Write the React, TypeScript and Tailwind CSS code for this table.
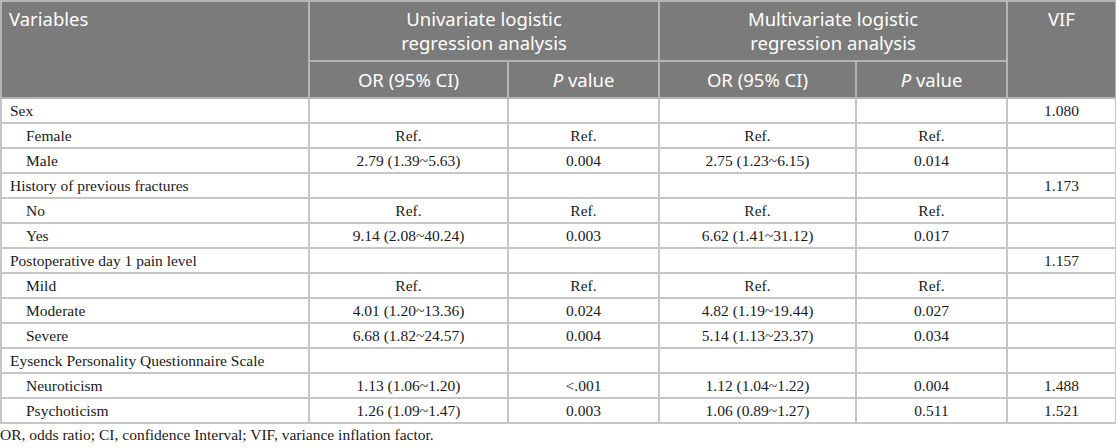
import React from "react";

type Row = {
  label: string;
  indent?: boolean;
  c1?: string;
  c2?: string;
  c3?: string;
  c4?: string;
  vif?: string;
};

const rows: Row[] = [
  { label: "Sex", vif: "1.080" },
  { label: "Female", indent: true, c1: "Ref.", c2: "Ref.", c3: "Ref.", c4: "Ref." },
  { label: "Male", indent: true, c1: "2.79 (1.39~5.63)", c2: "0.004", c3: "2.75 (1.23~6.15)", c4: "0.014" },
  { label: "History of previous fractures", vif: "1.173" },
  { label: "No", indent: true, c1: "Ref.", c2: "Ref.", c3: "Ref.", c4: "Ref." },
  { label: "Yes", indent: true, c1: "9.14 (2.08~40.24)", c2: "0.003", c3: "6.62 (1.41~31.12)", c4: "0.017" },
  { label: "Postoperative day 1 pain level", vif: "1.157" },
  { label: "Mild", indent: true, c1: "Ref.", c2: "Ref.", c3: "Ref.", c4: "Ref." },
  { label: "Moderate", indent: true, c1: "4.01 (1.20~13.36)", c2: "0.024", c3: "4.82 (1.19~19.44)", c4: "0.027" },
  { label: "Severe", indent: true, c1: "6.68 (1.82~24.57)", c2: "0.004", c3: "5.14 (1.13~23.37)", c4: "0.034" },
  { label: "Eysenck Personality Questionnaire Scale" },
  { label: "Neuroticism", indent: true, c1: "1.13 (1.06~1.20)", c2: "<.001", c3: "1.12 (1.04~1.22)", c4: "0.004", vif: "1.488" },
  { label: "Psychoticism", indent: true, c1: "1.26 (1.09~1.47)", c2: "0.003", c3: "1.06 (0.89~1.27)", c4: "0.511", vif: "1.521" },
];

const cellNum = "border-2 border-[#c6c6c6] text-center align-middle h-[25px] p-0 leading-[21px]";
const th = "border-2 border-[#b4b4b4] font-normal";

export default function App() {
  return (
    <div className="w-[1116px] h-[448px] bg-white overflow-hidden">
      <table
        className="w-[1115px] border-collapse table-fixed"
        style={{ fontFamily: '"Liberation Serif", "Times New Roman", serif' }}
      >
        <colgroup>
          <col className="w-[308px]" />
          <col className="w-[199px]" />
          <col className="w-[151px]" />
          <col className="w-[197px]" />
          <col className="w-[151px]" />
          <col className="w-[109px]" />
        </colgroup>
        <thead
          className="bg-[#7b7b7b] text-white text-[18.5px]"
          style={{ fontFamily: '"Noto Sans", "Open Sans", sans-serif' }}
        >
          <tr className="h-[60px]">
            <th rowSpan={2} className={`${th} text-left align-top px-[7px] pt-[5px] leading-[24px]`}>
              Variables
            </th>
            <th colSpan={2} className={`${th} text-center align-top pt-[5px] leading-[24px] px-2`}>
              Univariate logistic
              <br />
              regression analysis
            </th>
            <th colSpan={2} className={`${th} text-center align-top pt-[5px] leading-[24px] px-2`}>
              Multivariate logistic
              <br />
              regression analysis
            </th>
            <th rowSpan={2} className={`${th} text-center align-top pt-[5px] leading-[24px]`}>
              VIF
            </th>
          </tr>
          <tr className="h-[37px]">
            <th className={`${th} text-center align-middle leading-[24px]`}>OR (95% CI)</th>
            <th className={`${th} text-center align-middle leading-[24px]`}>
              <i>P</i> value
            </th>
            <th className={`${th} text-center align-middle leading-[24px]`}>OR (95% CI)</th>
            <th className={`${th} text-center align-middle leading-[24px]`}>
              <i>P</i> value
            </th>
          </tr>
        </thead>
        <tbody className="text-[15.5px] text-[#1a1a1a]">
          {rows.map((r, i) => (
            <tr key={i}>
              <td
                className={`border-2 border-[#c6c6c6] align-middle h-[25px] py-0 leading-[21px] ${
                  r.indent ? "pl-[24px]" : "pl-[8px]"
                }`}
              >
                {r.label}
              </td>
              <td className={cellNum}>{r.c1 ?? ""}</td>
              <td className={cellNum}>{r.c2 ?? ""}</td>
              <td className={cellNum}>{r.c3 ?? ""}</td>
              <td className={cellNum}>{r.c4 ?? ""}</td>
              <td className={cellNum}>{r.vif ?? ""}</td>
            </tr>
          ))}
        </tbody>
      </table>
      <p
        className="text-[15.5px] text-[#1a1a1a] mt-[1px] leading-[20px]"
        style={{ fontFamily: '"Liberation Serif", "Times New Roman", serif' }}
      >
        OR, odds ratio; CI, confidence Interval; VIF, variance inflation factor.
      </p>
    </div>
  );
}
